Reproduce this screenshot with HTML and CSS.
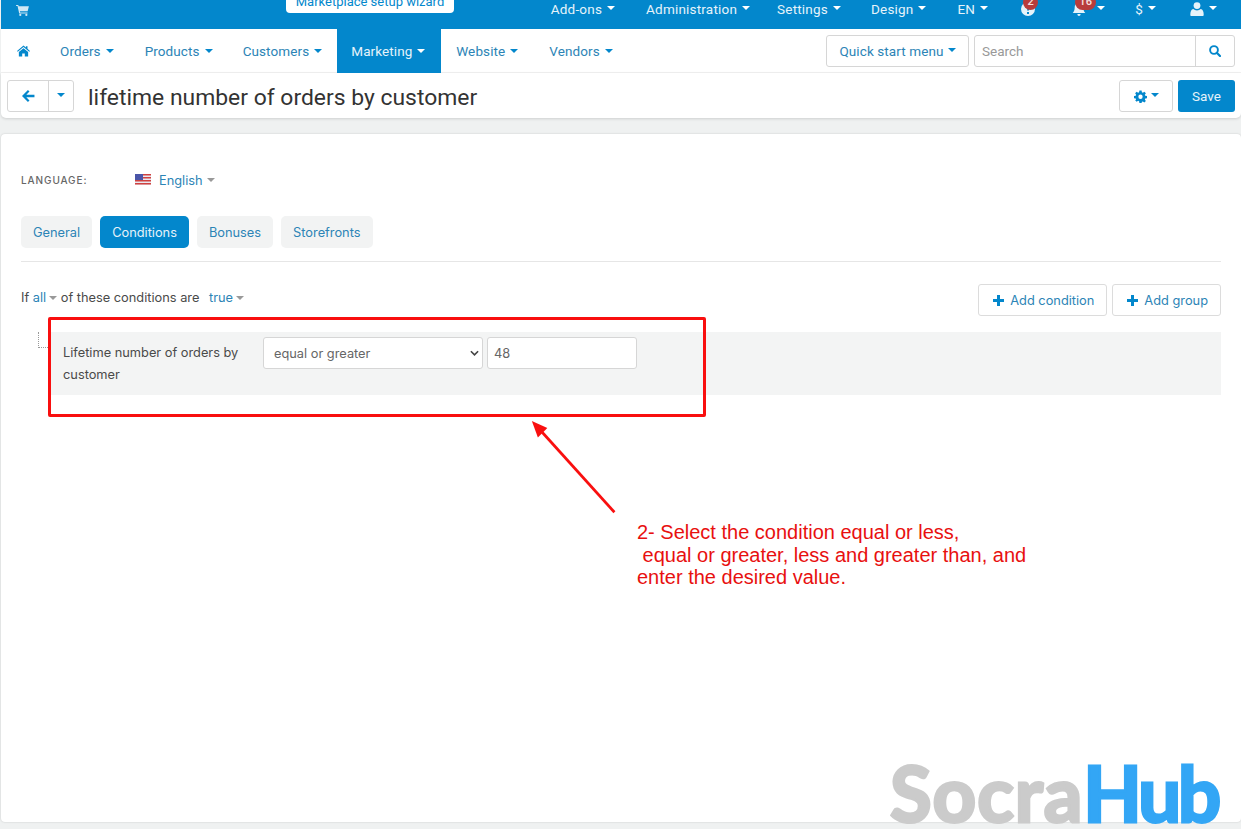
FILE: index.html
```html
<!DOCTYPE html>
<html lang="en">
<head>
<meta charset="utf-8">
<title>lifetime number of orders by customer</title>
<link rel="stylesheet" href="styles.css">
</head>
<body>
<header class="topbar">
  <svg class="cart" viewBox="0 0 14 12"><path d="M0 0h2.4l.4 1.4H14l-1.4 5.4H4.2l.3 1.3h8v1.2H3.4L1.6 1.2H0z"/><circle cx="4.6" cy="10.8" r="1.2"/><circle cx="11.2" cy="10.8" r="1.2"/></svg>
  <div class="wizard">Marketplace setup wizard</div>
  <nav class="topmenu">
    <span class="titem i1">Add-ons<i class="caret"></i></span>
    <span class="titem i2">Administration<i class="caret"></i></span>
    <span class="titem i3">Settings<i class="caret"></i></span>
    <span class="titem i4">Design<i class="caret"></i></span>
    <span class="titem i5">EN<i class="caret"></i></span>
    <span class="titem i6"><svg class="ticon" viewBox="0 0 14 14"><path fill-rule="evenodd" d="M7 0a7 7 0 1 1 0 14A7 7 0 0 1 7 0zM6 10v2h2v-2zM7 3C5.400 3 4.500 3.900 4.300 5.200l1.800.3c.1-.6.400-.9.900-.9s.8.300.8.700c0 .9-1.800 1.200-1.800 3.200h1.900c0-1.300 1.900-1.700 1.900-3.400C9.800 3.900 8.600 3 7 3z"/></svg><b class="badge b1">2</b></span>
    <span class="titem i7"><svg class="ticon" viewBox="0 0 14 14"><path d="M7 0c.6 0 1 .4 1 .9 2.200.4 3.300 2.100 3.300 4.300 0 3 .8 4.300 2 5.800H.7c1.200-1.500 2-2.800 2-5.800C2.700 3 3.800 1.300 6 .9 6 .4 6.400 0 7 0zM5.400 12h3.200c0 1-.7 2-1.600 2s-1.600-1-1.600-2z"/></svg><b class="badge b2">16</b><i class="caret"></i></span>
    <span class="titem i8">$<i class="caret"></i></span>
    <span class="titem i9"><svg class="ticon" viewBox="0 0 14 14"><circle cx="7" cy="3.600" r="3.400"/><path d="M1.500 14c-.8 0-1.200-.5-1.200-1.300 0-3 1-5.200 3-5.600 1 .9 2.200 1.300 3.700 1.300s2.700-.4 3.700-1.300c2 .4 3 2.600 3 5.600 0 .8-.4 1.300-1.200 1.300z"/></svg><i class="caret"></i></span>
  </nav>
</header>

<nav class="mainnav">
  <svg class="home" viewBox="0 0 14 12"><path d="M7 0l2.600 2.200V.8h1.700v2.900L14 6l-.8.9L7 1.700.8 6.900 0 6zM2 7.200L7 3l5 4.200V12H8.400V8.600H5.600V12H2z"/></svg>
  <span class="nitem n1">Orders<i class="caret blue"></i></span>
  <span class="nitem n2">Products<i class="caret blue"></i></span>
  <span class="nitem n3">Customers<i class="caret blue"></i></span>
  <span class="nitem active">Marketing<i class="caret"></i></span>
  <span class="nitem n4">Website<i class="caret blue"></i></span>
  <span class="nitem n5">Vendors<i class="caret blue"></i></span>
  <span class="quick">Quick start menu<i class="caret blue"></i></span>
  <div class="search">
    <span class="search-text">Search</span>
    <span class="search-btn"><svg class="sicon" viewBox="0 0 12 12"><circle cx="5" cy="5" r="3.900" fill="none" stroke="#0387cc" stroke-width="1.900"/><path d="M7.800 7.800L11 11" stroke="#0387cc" stroke-width="2.200" stroke-linecap="round"/></svg></span>
  </div>
</nav>

<section class="titlebar">
  <div class="backgroup">
    <span class="back"><svg class="backicon" viewBox="0 0 12 11"><path d="M5.500 0l1.400 1.400L4 4.300h7.500v2.400H4l2.900 2.900L5.500 11 0 5.500z"/></svg></span>
    <span class="backdrop"><i class="caret blue"></i></span>
  </div>
  <h1>lifetime number of orders by customer</h1>
  <span class="gear"><svg class="gearicon" viewBox="0 0 24 24"><path fill-rule="evenodd" d="M10 1h4l.6 3.200 1.800.8L19.100 3.100l2.800 2.800L20 8.600l.8 1.800 3.200.6v4l-3.200.6-.8 1.800 1.900 2.700-2.800 2.800-2.700-1.900-1.800.8L14 24h-4l-.6-3.200-1.800-.8-2.700 1.900-2.800-2.800L4 17.400l-.8-1.800L0 15v-4l3.200-.6.800-1.800L2.100 5.900l2.800-2.800L7.600 5l1.800-.8zM12 8.500a4 4 0 1 0 0 8 4 4 0 0 0 0-8z"/></svg><i class="caret blue"></i></span>
  <span class="save">Save</span>
</section>

<main class="panel">
  <div class="lang">
    <span class="lang-label">LANGUAGE:</span>
    <svg class="flag" viewBox="0 0 16 11"><rect width="16" height="11" fill="#e8e8f0"/><path d="M0 0h16v1.500H0zM0 3h16v1.500H0zM0 6h16v1.500H0zM0 9h16v1.500H0z" fill="#d0413f"/><rect width="8" height="6" fill="#4a55a8"/></svg>
    <span class="lang-value">English</span><i class="caret grey"></i>
  </div>
  <div class="tabs">
    <span class="tab">General</span>
    <span class="tab on">Conditions</span>
    <span class="tab">Bonuses</span>
    <span class="tab">Storefronts</span>
  </div>
  <div class="condhead">
    <div class="condtext">If <a>all</a><i class="caret grey"></i> of these conditions are <a class="tr">true</a><i class="caret grey"></i></div>
    <div class="condbtns">
      <span class="addbtn"><svg class="plus" viewBox="0 0 11 11"><path d="M4 0h3v4h4v3H7v4H4V7H0V4h4z"/></svg>Add condition</span>
      <span class="addbtn"><svg class="plus" viewBox="0 0 11 11"><path d="M4 0h3v4h4v3H7v4H4V7H0V4h4z"/></svg>Add group</span>
    </div>
  </div>
  <div class="condrow">
    <div class="tree"></div>
    <div class="rule">
      <div class="rule-label">Lifetime number of orders by customer</div>
      <div class="selectbox">equal or greater<svg class="chev" viewBox="0 0 10 6"><path d="M1 1l4 4 4-4" fill="none" stroke="#444" stroke-width="1.800"/></svg></div>
      <div class="valuebox">48</div>
    </div>
  </div>
</main>

<div class="redbox"></div>
<svg class="arrow" viewBox="0 0 100 110"><path d="M97 107L13 14" stroke="#f90f0f" stroke-width="3.200"/><path d="M1 1L19 9 8 20z" fill="#f90f0f"/></svg>
<p class="note">2- Select the condition equal or less,<br>&nbsp;equal or greater, less and greater than, and<br>enter the desired value.</p>
<div class="mark">Socra<span>Hub</span></div>
</body>
</html>
```
FILE: styles.css
```css
* { box-sizing: border-box; }
html, body { margin: 0; height: 829px; overflow: hidden; }
body { background: #eff1f1; font-family: Roboto, sans-serif; font-size: 13px; color: #333; position: relative; }
.caret { display: inline-block; width: 0; height: 0; margin-left: 6px; vertical-align: 2px; border-top: 4px solid #fff; border-left: 4px solid transparent; border-right: 4px solid transparent; }
.caret.blue { border-top-color: #0387cc; }
.caret.grey { border-top-color: #999; }

.topbar { height: 29px; margin-left: 1px; background: #0387cc; display: flex; align-items: center; color: #e6f3fa; position: relative; }
.cart { width: 13px; height: 11px; margin-left: 15px; fill: #cfe8f5; position: relative; top: -4px; }
.wizard { position: absolute; left: 285px; top: -8px; width: 168px; height: 21px; background: #fff; border-radius: 4px; color: #0387cc; font-size: 13px; line-height: 20px; text-align: center; }
.topmenu { display: flex; margin-left: auto; height: 100%; align-items: center; padding-bottom: 11px; font-size: 13.500px; letter-spacing: .2px; }
.titem { display: inline-flex; align-items: center; white-space: nowrap; position: relative; }
.titem .caret { margin-left: 5px; margin-top: -2px; }
.i2 { margin-left: 31px; } .i3 { margin-left: 27px; } .i4 { margin-left: 30px; } .i5 { margin-left: 31px; }
.i6 { margin-left: 33px; width: 14px; } .i7 { margin-left: 37px; } .i8 { margin-left: 30px; } .i9 { margin-left: 34px; margin-right: 24px; }
.ticon { width: 14px; height: 14px; fill: #e6f3fa; }
.badge { position: absolute; top: -7px; height: 15px; border-radius: 8px; background: #b83c3c; color: #f5e0e0; font-weight: 500; font-size: 11px; line-height: 14px; text-align: center; }
.b1 { left: 2px; width: 15px; } .b2 { left: 3px; width: 21px; }
.i7 .caret { margin-left: 11px; margin-top: -2px; }

.mainnav { height: 44px; margin-left: 1px; background: #fff; display: flex; align-items: center; border-bottom: 1px solid #f2f2f2; color: #2c84b6; }
.home { width: 13px; height: 12px; margin-left: 16px; fill: #0387cc; }
.nitem { height: 100%; display: flex; align-items: center; font-size: 13.500px; letter-spacing: .1px; }
.nitem .caret { margin-left: 5px; margin-top: 1px; }
.n1 { margin-left: 30px; } .n2 { margin-left: 31px; } .n3 { margin-left: 30px; }
.active { margin-left: 15px; width: 104px; height: 44px; padding-left: 14px; background: #0387cc; color: #e6f3fa; }
.n4 { margin-left: 15px; } .n5 { margin-left: 31px; }
.quick { margin-left: auto; width: 143px; height: 32px; border: 1px solid #d6d6d6; border-radius: 3px; display: flex; align-items: center; justify-content: center; font-size: 13.500px; letter-spacing: .1px; }
.quick .caret { margin-left: 4px; margin-top: -2px; }
.search { margin: 0 6px 0 5px; width: 261px; height: 32px; border: 1px solid #d6d6d6; border-radius: 3px; display: flex; }
.search-text { flex: 1; padding-left: 7px; line-height: 30px; font-size: 13.500px; color: #999; }
.search-btn { width: 39px; border-left: 1px solid #d6d6d6; display: flex; align-items: center; justify-content: center; }
.sicon { width: 12px; height: 12px; }

.titlebar { height: 45px; margin-left: 1px; background: #fff; border-radius: 0 0 5px 5px; box-shadow: 0 1px 3px rgba(0,0,0,.14); display: flex; align-items: center; padding: 0 6px; }
.backgroup { width: 67px; height: 32px; margin-top: 1px; display: flex; border: 1px solid #d6d6d6; border-radius: 3px; }
.back { width: 41px; border-right: 1px solid #d6d6d6; display: flex; align-items: center; justify-content: center; }
.backicon { width: 13px; height: 12px; fill: #0387cc; }
.backdrop { flex: 1; display: flex; align-items: center; justify-content: center; }
.backdrop .caret { margin: -2px 0 0; }
h1 { margin: 3px 0 0 14px; font-size: 22.900px; font-weight: 400; color: #333; flex: 1; }
.gear { width: 54px; height: 32px; margin-top: 1px; border: 1px solid #d6d6d6; border-radius: 3px; display: flex; align-items: center; justify-content: center; }
.gearicon { width: 13px; height: 13px; fill: #0387cc; }
.gear .caret { margin-left: 4px; margin-top: -2px; }
.save { width: 57px; height: 32px; margin-top: 1px; margin-left: 5px; background: #0387cc; border-radius: 3px; color: #e6f3fa; font-size: 13.500px; line-height: 32px; text-align: center; }

.panel { height: 688px; margin: 16px 0 0 1px; padding: 36px 20px 0; background: #fff; border-radius: 4px; box-shadow: 0 0 2px rgba(0,0,0,.18); font-family: Inter, sans-serif; font-size: 12.800px; color: #4a4a4a; }
.lang { display: flex; align-items: center; height: 20px; }
.lang-label { width: 114px; font-size: 10px; font-weight: 500; letter-spacing: .9px; color: #666; }
.flag { width: 16px; height: 11px; margin-top: -2px; }
.lang-value { margin-left: 8px; color: #2c84b6; }
.lang .caret { margin-left: 4px; margin-top: 0; vertical-align: 0; }
.tabs { display: flex; gap: 8px; margin-top: 26px; padding-bottom: 13px; border-bottom: 1px solid #e6e6e6; }
.tab { height: 32px; padding: 0 12px; background: #f2f3f3; border-radius: 5px; color: #2c84b6; line-height: 33px; }
.tab.on { background: #0387cc; color: #e6f3fa; }
.condhead { display: flex; justify-content: space-between; margin-top: 22px; }
.condtext { margin-top: 6px; line-height: 16px; }
.condtext a { color: #2c84b6; }
.condtext .tr { margin-left: 6px; }
.condtext .caret { margin-left: 3px; }
.condbtns { display: flex; gap: 5px; }
.addbtn { height: 32px; padding: 0 12px 0 14px; border: 1px solid #dcdcdc; border-radius: 3px; display: flex; align-items: center; color: #2c84b6; }
.plus { width: 11px; height: 11px; fill: #0387cc; margin-right: 6px; }
.condrow { display: flex; margin-top: 16px; }
.tree { width: 10px; height: 16px; margin: 0 0 0 17px; border-left: 1px dotted #999; border-bottom: 1px dotted #999; }
.rule { flex: 1; margin-left: 3px; height: 63px; background: #f3f4f4; display: flex; padding: 5px 0 0 12px; }
.rule-label { width: 200px; margin-top: 5px; line-height: 22px; }
.selectbox { width: 220px; height: 32px; background: #fff; border: 1px solid #d6d6d6; border-radius: 3px; padding-left: 10px; line-height: 32px; color: #666; position: relative; }
.chev { position: absolute; right: 3px; top: 12px; width: 9px; height: 6px; }
.valuebox { width: 150px; height: 32px; margin-left: 4px; background: #fff; border: 1px solid #d6d6d6; border-radius: 3px; padding-left: 6px; line-height: 32px; color: #666; }

.redbox { position: absolute; left: 48px; top: 317px; width: 658px; height: 100px; border: 3px solid #f90f0f; border-radius: 2px; }
.arrow { position: absolute; left: 531px; top: 420px; width: 86px; height: 95px; }
.note { position: absolute; left: 637px; top: 521px; margin: 0; font-family: "Liberation Sans", Arial, sans-serif; font-size: 20px; line-height: 22.500px; color: #e8100f; white-space: nowrap; }
.mark { position: absolute; left: 890px; top: 749px; font-family: Lato, sans-serif; font-weight: 700; font-size: 76px; line-height: 88px; letter-spacing: 1px; color: #cbcbcb; -webkit-text-stroke: 3px #cbcbcb; white-space: nowrap; }
.mark span { letter-spacing: -3px; color: #33a6f5; -webkit-text-stroke-color: #33a6f5; }
```
